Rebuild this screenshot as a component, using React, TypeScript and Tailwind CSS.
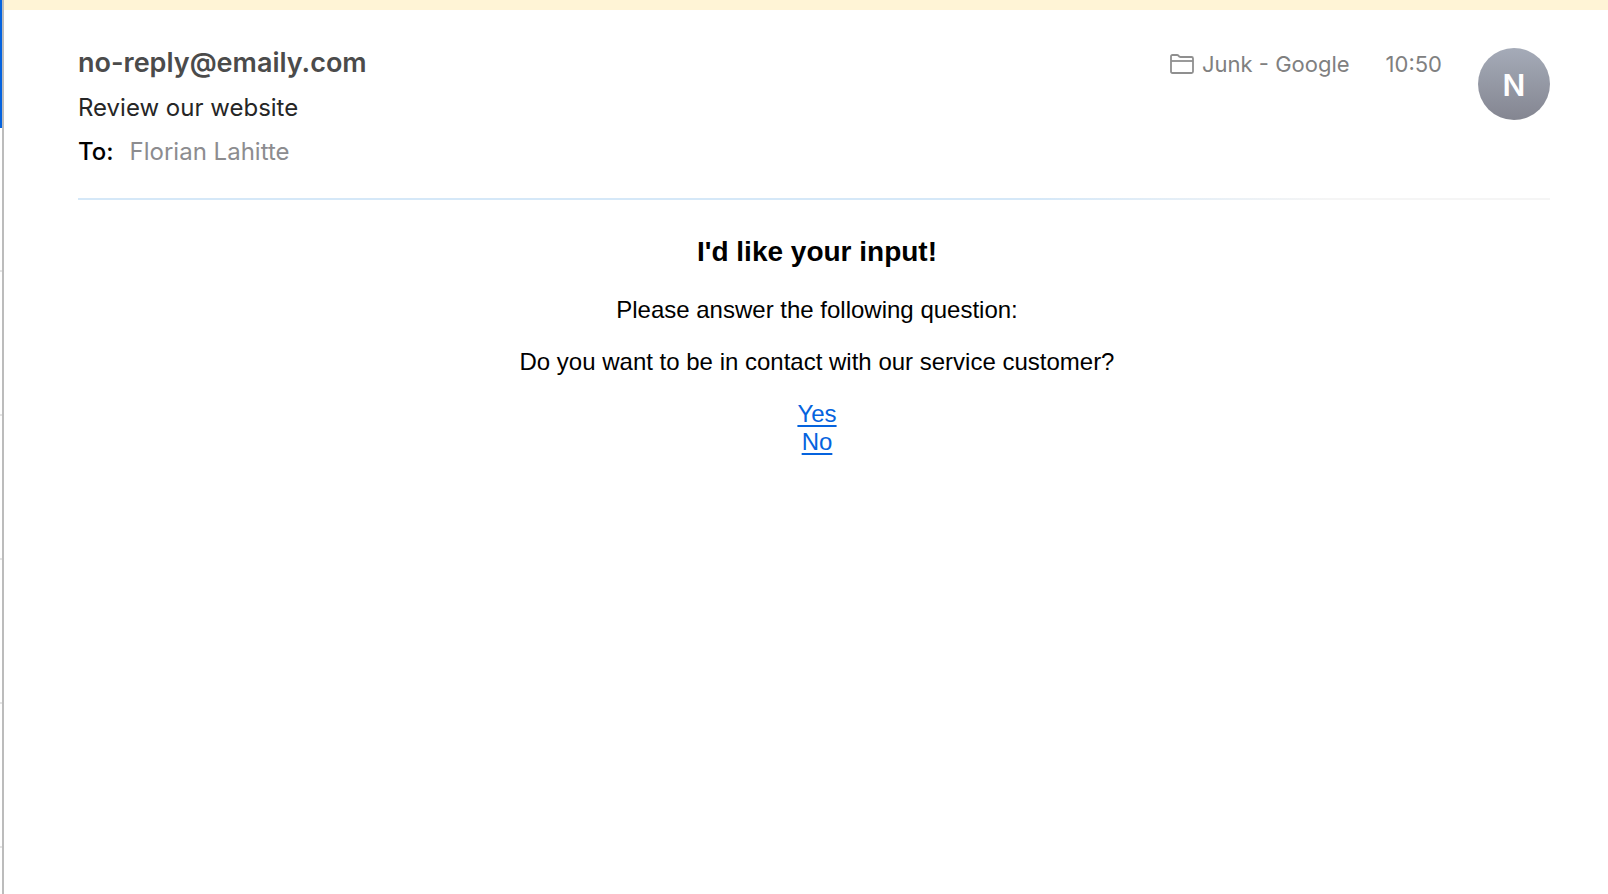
function FolderIcon() {
  return (
    <svg width="24" height="20" viewBox="0 0 24 20" fill="none" stroke="#8f8f8f" strokeWidth="1.8" aria-hidden="true">
      <path d="M1 17.5V2.5Q1 1 2.500 1H7Q8 1 8.500 1.800Q9.200 3 10.500 3H21.500Q23 3 23 4.500V17.500Q23 19 21.500 19H2.500Q1 19 1 17.500Z" />
      <path d="M1 7H23" />
    </svg>
  );
}

function MessageListEdge() {
  return (
    <ul className="w-[2px] shrink-0" aria-hidden="true">
      <li className="h-32 bg-[#0563de]" />
      <li className="h-36 border-b-2 border-[#e4e4e4]" />
      <li className="h-36 border-b-2 border-[#e4e4e4]" />
      <li className="h-36 border-b-2 border-[#e4e4e4]" />
      <li className="h-36 border-b-2 border-[#e4e4e4]" />
      <li className="h-36 border-b-2 border-[#e4e4e4]" />
    </ul>
  );
}

export default function App() {
  return (
    <div className="flex h-screen overflow-hidden bg-white">
      <MessageListEdge />
      <main className="flex min-w-0 flex-1 flex-col border-l-2 border-[#bcbcbc]">
        <div className="h-[10px] shrink-0 bg-[#fff4d6]" />
        <article className="pr-[58px] pl-[74px]">
          <header className="flex items-start justify-between pt-[38px] font-['Inter',sans-serif]">
            <div>
              <h1 className="text-[27px] leading-[30px] font-semibold text-[#4b4b4b]">no-reply@emaily.com</h1>
              <p className="mt-4 text-2xl leading-7 text-[#262626]">Review our website</p>
              <p className="mt-4 flex gap-4 text-2xl leading-7 text-black">
                <span className="font-medium">To:</span>
                <span className="text-[#8c8c8f]">Florian Lahitte</span>
              </p>
            </div>
            <div className="flex items-start gap-9 text-[22px] leading-8 text-[#808080]">
              <div className="flex items-center gap-2">
                <FolderIcon />
                <span>Junk - Google</span>
              </div>
              <time>10:50</time>
              <div className="flex size-[72px] items-center justify-center rounded-full bg-linear-to-b from-[#a5abb8] to-[#848691] pt-0.5 text-[30px] font-semibold text-white">
                N
              </div>
            </div>
          </header>
          <div className="mt-8 h-[2px] bg-linear-to-r from-[#d5e8f8] from-65% to-[#f5f5f5] to-85%" />
          <section className="pt-9 pl-1.5 text-center font-['Liberation_Sans',sans-serif] text-2xl leading-7 text-black">
            <h2 className="mb-7 text-[28px] leading-8 font-bold">I&apos;d like your input!</h2>
            <p className="mb-6">Please answer the following question:</p>
            <p className="mb-6">Do you want to be in contact with our service customer?</p>
            <p>
              <a href="#yes" className="text-[#0563de] underline decoration-2 underline-offset-3">Yes</a>
              <br />
              <a href="#no" className="text-[#0563de] underline decoration-2 underline-offset-3">No</a>
            </p>
          </section>
        </article>
      </main>
    </div>
  );
}
